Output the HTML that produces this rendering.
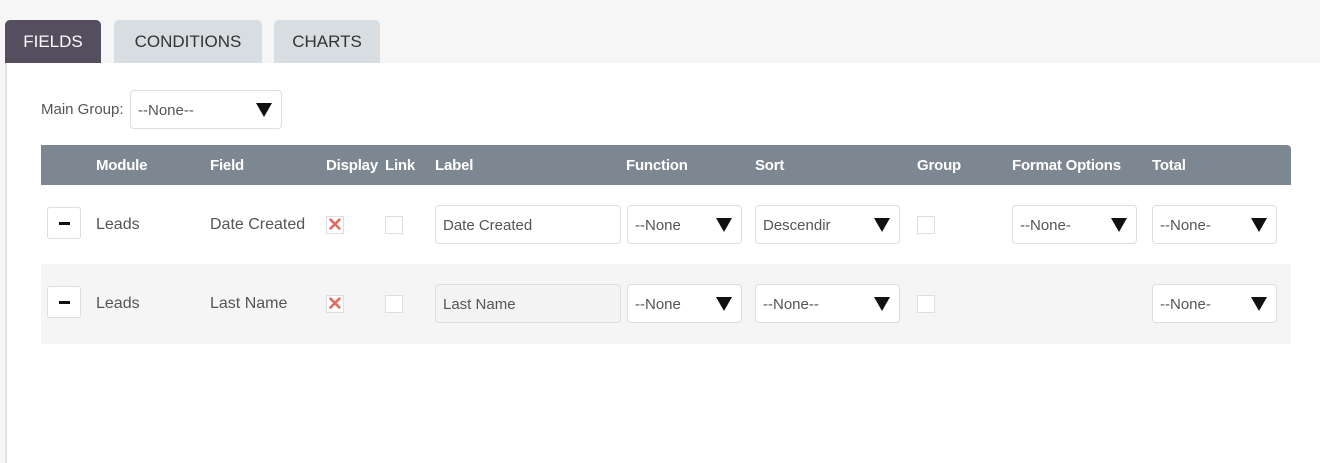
<!DOCTYPE html>
<html><head><style>
*{box-sizing:border-box;margin:0;padding:0}
body{width:1320px;height:453px;background:#f6f6f6;font-family:"Liberation Sans",sans-serif;position:relative;overflow:hidden;color:#555}
.a{position:absolute}
.tab{position:absolute;top:20px;height:43px;border-radius:5px 5px 0 0;font-size:17px;line-height:44px;text-align:center;color:#333;background:#d8dde1}
.panel{position:absolute;left:5px;top:63px;width:1315px;height:400px;background:#fff;border-left:2px solid #e2e2e2}
.sel{position:absolute;height:39px;border:1px solid #ddd;border-radius:4px;background:#fff;font-size:15px;line-height:39px;padding-left:7px;color:#555;overflow:hidden;white-space:nowrap}
.sel:after{content:"";position:absolute;right:9px;top:12px;border-left:8px solid transparent;border-right:8px solid transparent;border-top:14px solid #111}
.inp{position:absolute;height:39px;border:1px solid #ddd;border-radius:4px;background:#fff;font-size:15px;line-height:39px;padding-left:7px;color:#555}
.hd{position:absolute;top:145px;font-size:15px;font-weight:bold;color:#fff;line-height:41px;letter-spacing:-0.2px}
.cb{position:absolute;width:18px;height:18px;border:1px solid #ddd;background:#fff}
.tx{position:absolute;font-size:16px;color:#555}
.mb{position:absolute;left:47px;width:34px;height:32px;border:1px solid #ddd;border-radius:3px;background:#fff}
.mb:after{content:"";position:absolute;left:11px;top:14px;width:11px;height:3px;background:#111}
.x{color:#e06b60;font-size:19px;font-weight:bold;line-height:17px;text-align:center}
</style></head><body>
<div class="tab" style="left:5px;width:96px;background:#544e5f;color:#fff">FIELDS</div>
<div class="tab" style="left:114px;width:148px">CONDITIONS</div>
<div class="tab" style="left:274px;width:106px">CHARTS</div>
<div class="panel"></div>
<div class="tx" style="left:41px;top:101px;font-size:15px">Main Group:</div>
<div class="sel" style="left:130px;top:90px;width:152px">--None--</div>
<div class="a" style="left:41px;top:145px;width:1250px;height:40px;background:#7d8791;border-radius:0 4px 0 0"></div>
<div class="hd" style="left:96px">Module</div>
<div class="hd" style="left:210px">Field</div>
<div class="hd" style="left:326px">Display</div>
<div class="hd" style="left:385px">Link</div>
<div class="hd" style="left:435px">Label</div>
<div class="hd" style="left:626px">Function</div>
<div class="hd" style="left:755px">Sort</div>
<div class="hd" style="left:917px">Group</div>
<div class="hd" style="left:1012px">Format Options</div>
<div class="hd" style="left:1152px">Total</div>
<div class="a" style="left:41px;top:264px;width:1250px;height:80px;background:#f5f5f5"></div>

<div class="mb" style="top:207px"></div>
<div class="tx" style="left:96px;top:216px">Leads</div>
<div class="tx" style="left:210px;top:216px">Date Created</div>
<div class="cb x" style="left:326px;top:216px">✕</div>
<div class="cb" style="left:385px;top:216px"></div>
<div class="inp" style="left:435px;top:205px;width:186px">Date Created</div>
<div class="sel" style="left:627px;top:205px;width:115px">--None</div>
<div class="sel" style="left:755px;top:205px;width:145px">Descendir</div>
<div class="cb" style="left:917px;top:216px"></div>
<div class="sel" style="left:1012px;top:205px;width:125px">--None-</div>
<div class="sel" style="left:1152px;top:205px;width:125px">--None-</div>

<div class="mb" style="top:286px"></div>
<div class="tx" style="left:96px;top:295px">Leads</div>
<div class="tx" style="left:210px;top:295px">Last Name</div>
<div class="cb x" style="left:326px;top:295px">✕</div>
<div class="cb" style="left:385px;top:295px"></div>
<div class="inp" style="left:435px;top:284px;width:186px;background:#f3f3f3">Last Name</div>
<div class="sel" style="left:627px;top:284px;width:115px">--None</div>
<div class="sel" style="left:755px;top:284px;width:145px">--None--</div>
<div class="cb" style="left:917px;top:295px"></div>
<div class="sel" style="left:1152px;top:284px;width:125px">--None-</div>
</body></html>
